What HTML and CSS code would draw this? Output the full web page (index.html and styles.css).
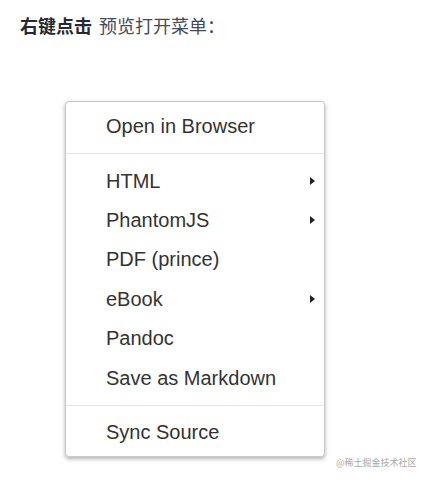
FILE: index.html
```html
<!DOCTYPE html>
<html>
<head>
<meta charset="utf-8">
<link rel="stylesheet" href="styles.css">
</head>
<body>
<p class="intro"><strong>右键点击</strong> 预览打开菜单：</p>
<div class="stage">
  <div class="menu">
    <div class="item">Open in Browser</div>
    <div class="sep"></div>
    <div class="item">HTML<span class="arrow"></span></div>
    <div class="item">PhantomJS<span class="arrow"></span></div>
    <div class="item">PDF (prince)</div>
    <div class="item">eBook<span class="arrow"></span></div>
    <div class="item">Pandoc</div>
    <div class="item">Save as Markdown</div>
    <div class="sep"></div>
    <div class="item">Sync Source</div>
  </div>
  <span class="watermark">@稀土掘金技术社区</span>
</div>
</body>
</html>
```
FILE: styles.css
```css
html, body {
  margin: 0;
  padding: 0;
  background: #fff;
}
body {
  font-family: "Liberation Sans", "Noto Sans CJK SC", sans-serif;
}
.intro {
  margin: 0;
  padding: 14px 0 0 20px;
  font-size: 18px;
  line-height: 26px;
  color: #454b57;
}
.intro strong {
  color: #252933;
  font-weight: 700;
  margin-right: 2px;
}
.stage {
  position: relative;
  padding: 61px 0 30px 65px;
}
.menu {
  box-sizing: border-box;
  width: 260px;
  border: 1px solid #c9c9c9;
  border-radius: 4px;
  box-shadow: 0 2px 4px rgba(0,0,0,0.3);
  padding: 5px 0 4px;
  background: #fff;
}
.item {
  height: 39.4px;
  display: flex;
  align-items: center;
  justify-content: space-between;
  padding: 0 9px 0 40px;
  font-size: 20px;
  color: #333;
}
.sep {
  height: 1px;
  background: #e6e6e6;
  margin: 7px 0;
}
.arrow {
  width: 0;
  height: 0;
  border-top: 4px solid transparent;
  border-bottom: 4px solid transparent;
  border-left: 5px solid #222;
}
.watermark {
  position: absolute;
  left: 336px;
  top: 417px;
  font-family: "Noto Sans CJK SC", sans-serif;
  font-size: 9px;
  line-height: 12px;
  color: #a8a8a8;
  white-space: nowrap;
}
```
